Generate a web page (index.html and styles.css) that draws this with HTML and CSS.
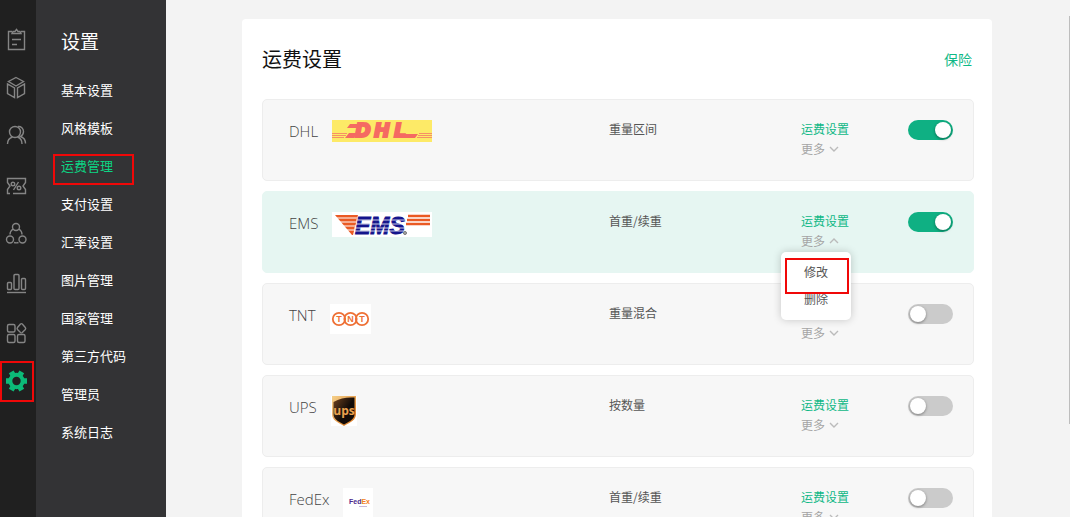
FILE: index.html
```
<!DOCTYPE html>
<html lang="zh-CN">
<head>
    <meta charset="UTF-8">
    <meta name="viewport" content="width=device-width, initial-scale=1.0">
    <title>运费设置</title>
    <link rel="stylesheet" href="styles.css">
</head>
<body>
    <nav class="rail">
        <a href="#" aria-label="订单">
            <svg viewBox="0 0 24 25"><path d="M7 5.500H3.500v18h16v-18H16M7 7.500l1-2h2l1.500-2 1.500 2h2l1 2zM7 13.500h9M7 18.500h5"/></svg>
        </a>
        <a href="#" aria-label="商品">
            <svg viewBox="0 0 24 25"><path d="M11 2.500l7.500 4L11 11 3.500 6.500zM2.500 9v9.500l7 4V13zM19.500 9v9.500l-7 4V13z"/></svg>
        </a>
        <a href="#" aria-label="客户">
            <svg viewBox="0 0 24 25"><circle cx="10" cy="8" r="5.500"/><path d="M2.500 20c0-4 2-6 5-7M12.500 13c3 1 4.500 3 4.500 7M13 2.500c3-.5 5.500 2 5.500 5 0 2-1 4-3 5 3 1 5 3 5 7"/></svg>
        </a>
        <a href="#" aria-label="营销">
            <svg viewBox="0 0 24 25"><path d="M5 20.500H2.500v-4L5 13 2.500 9.500v-4h18v4L18 13l2.500 3.500v4H8M8.500 17l5-8"/><circle cx="8" cy="11" r="1.800"/><circle cx="14" cy="15" r="1.800"/></svg>
        </a>
        <a href="#" aria-label="分销">
            <svg viewBox="0 0 24 25"><circle cx="11" cy="5" r="3.500"/><circle cx="5" cy="17.500" r="3.500"/><circle cx="17.500" cy="17.500" r="3.500"/><path d="M8 7c-2 1.500-3 3.500-3 5.500M14 7c2 1.500 3 3.500 3 5.500M9 20.500c1.500.500 3 .5 4.500 0"/></svg>
        </a>
        <a href="#" aria-label="统计">
            <svg viewBox="0 0 24 25"><rect x="2.500" y="11.500" width="4" height="7" rx="1"/><rect x="9" y="3.500" width="5" height="15" rx="1"/><rect x="16.500" y="7.500" width="4" height="11" rx="1"/><path d="M2 21.500h19"/></svg>
        </a>
        <a href="#" aria-label="应用">
            <svg viewBox="0 0 24 25"><rect x="2.500" y="4.500" width="7.500" height="7.500" rx="1.500"/><rect x="2.500" y="14.500" width="7.500" height="8" rx="1.500"/><rect x="12.500" y="14.500" width="7.500" height="8" rx="1.500"/><path d="M15.500 4l-3 3.500q-.8 1 0 2l3 3q.9.700 1.800 0l3-3q.8-1 0-2l-3-3.500q-.9-.7-1.800 0z"/></svg>
        </a>
        <a href="#" class="current marked" aria-label="设置">
            <svg viewBox="0 0 24 25"><circle cx="11.500" cy="12" r="6.200" stroke-width="4"/><path d="M1 12h4M18 12h4M15 18.100l1.800 3M8 18.100l-1.800 3M15 5.900l1.800-3M8 5.900l-1.800-3" stroke-width="5.500"/></svg>
        </a>
    </nav>

    <aside class="menu">
        <h2>设置</h2>
        <ul>
            <li><a href="#">基本设置</a></li>
            <li><a href="#">风格模板</a></li>
            <li class="active marked"><a href="#">运费管理</a></li>
            <li><a href="#">支付设置</a></li>
            <li><a href="#">汇率设置</a></li>
            <li><a href="#">图片管理</a></li>
            <li><a href="#">国家管理</a></li>
            <li><a href="#">第三方代码</a></li>
            <li><a href="#">管理员</a></li>
            <li><a href="#">系统日志</a></li>
        </ul>
    </aside>

    <main class="content">
        <section class="panel">
            <header class="panel-header">
                <h1>运费设置</h1>
                <a href="#">保险</a>
            </header>

            <div class="item">
                <div class="name">
                    <label for="dhl">DHL</label>
                    <svg class="logo" width="100" height="22" viewBox="0 0 100 22">
                        <rect width="100" height="22" fill="#fdea67"/>
                        <path d="M0 13.500h15M0 15.500h14M0 17.500h12M87 13.500h13M86 15.500h14M85 17.500h15" stroke="#f69066"/>
                        <path d="M18 4h12l-3 4H15zM13 18l4-5h8l-3 5zM67 14h19l-3 4H66z" fill="#f56a62"/>
                        <text class="dhl-text" x="23 42 62" y="17">DHL</text>
                    </svg>
                </div>
                <div class="type">重量区间</div>
                <div class="actions">
                    <a href="#">运费设置</a>
                    <button class="more">更多 <svg viewBox="0 0 10 6"><path d="M1 1l4 4 4-4"/></svg></button>
                </div>
                <input type="checkbox" class="switch" id="dhl" checked>
            </div>

            <div class="item selected">
                <div class="name">
                    <label for="ems">EMS</label>
                    <svg class="logo" width="100" height="25" viewBox="0 0 100 25">
                        <rect width="100" height="25" fill="#fff"/>
                        <path d="M3 3h23l-5 20h-1z" fill="#ea5a24"/>
                        <path d="M76 4h22M75 8h23M74 12h24" stroke="#ea5a24" stroke-width="2.500"/>
                        <path d="M2 6h24M2 10h24M2 14h24M2 18h24" stroke="#fff"/>
                        <text class="ems-text" x="23" y="22">EMS</text>
                        <path d="M24 8h51M24 12h49M22 16h51M22 19h51" stroke="#fff" stroke-width=".8"/>
                        <circle cx="73" cy="21" r="1.500" fill="#aaa" stroke="#777"/>
                    </svg>
                </div>
                <div class="type">首重/续重</div>
                <div class="actions">
                    <a href="#">运费设置</a>
                    <button class="more" aria-expanded="true">更多 <svg viewBox="0 0 10 6"><path d="M1 5l4-4 4 4"/></svg></button>
                    <div class="dropdown">
                        <button class="marked">修改</button>
                        <button>删除</button>
                    </div>
                </div>
                <input type="checkbox" class="switch" id="ems" checked>
            </div>

            <div class="item">
                <div class="name">
                    <label for="tnt">TNT</label>
                    <svg class="logo" width="41" height="30" viewBox="0 0 41 30">
                        <rect width="41" height="30" fill="#fff"/>
                        <g fill="none" stroke="#ee7035" stroke-width="1.800">
                            <circle cx="9" cy="15" r="6.200"/>
                            <circle cx="20.500" cy="15" r="6.200"/>
                            <circle cx="32" cy="15" r="6.200"/>
                        </g>
                        <g class="tnt-text">
                            <text x="9" y="18">T</text>
                            <text x="20.500" y="18">N</text>
                            <text x="32" y="18">T</text>
                        </g>
                    </svg>
                </div>
                <div class="type">重量混合</div>
                <div class="actions">
                    <a href="#">运费设置</a>
                    <button class="more">更多 <svg viewBox="0 0 10 6"><path d="M1 1l4 4 4-4"/></svg></button>
                </div>
                <input type="checkbox" class="switch" id="tnt">
            </div>

            <div class="item">
                <div class="name">
                    <label for="ups">UPS</label>
                    <svg class="logo" width="26" height="30" viewBox="0 0 26 30">
                        <defs>
                            <linearGradient id="gold" x2="1" y2="1">
                                <stop offset="0" stop-color="#f5d08a"/>
                                <stop offset="1" stop-color="#d9741c"/>
                            </linearGradient>
                            <linearGradient id="brown" x2=".6" y2=".5">
                                <stop offset="0" stop-color="#70431f"/>
                                <stop offset="1" stop-color="#130c08"/>
                            </linearGradient>
                        </defs>
                        <rect width="26" height="30" fill="#fff"/>
                        <path d="M1 0h24v18c0 6-5 8-12 12C6 26 1 24 1 18z" fill="url(#gold)"/>
                        <path d="M2.500 6C9 2 16 1 23.500 1.500V18c0 5-4 7-10.500 10.500C6.500 25 2.500 23 2.500 18z" fill="url(#brown)"/>
                        <text class="ups-text" x="13" y="19">ups</text>
                    </svg>
                </div>
                <div class="type">按数量</div>
                <div class="actions">
                    <a href="#">运费设置</a>
                    <button class="more">更多 <svg viewBox="0 0 10 6"><path d="M1 1l4 4 4-4"/></svg></button>
                </div>
                <input type="checkbox" class="switch" id="ups">
            </div>

            <div class="item">
                <div class="name">
                    <label for="fedex">FedEx</label>
                    <svg class="logo" width="30" height="30" viewBox="0 0 30 30">
                        <rect width="30" height="30" fill="#fff"/>
                        <text class="fedex-text" x="6" y="16">Fed<tspan>Ex</tspan></text>
                        <path d="M16 18.500h8" stroke="#c9b8d8"/>
                    </svg>
                </div>
                <div class="type">首重/续重</div>
                <div class="actions">
                    <a href="#">运费设置</a>
                    <button class="more">更多 <svg viewBox="0 0 10 6"><path d="M1 1l4 4 4-4"/></svg></button>
                </div>
                <input type="checkbox" class="switch" id="fedex">
            </div>
        </section>
        <div class="scroll-thumb"></div>
    </main>
</body>
</html>
```
FILE: styles.css
```
* {
    box-sizing: border-box;
}

body {
    display: flex;
    height: 100vh;
    margin: 0;
    overflow: hidden;
    background: #f3f3f3;
    color: #555;
    font-family: "Noto Sans CJK SC", sans-serif;
    font-size: 12px;
    line-height: 20px;
}

a {
    color: #0fb886;
    text-decoration: none;
}

button {
    padding: 0;
    border: none;
    background: none;
    color: inherit;
    font: inherit;
    cursor: pointer;
}

/* icon rail */
.rail {
    flex: 0 0 36px;
    padding: 14px 2px 0 0;
    background: #202020;
}

.rail a {
    display: flex;
    align-items: center;
    justify-content: center;
    height: 49px;
}

.rail svg {
    width: 24px;
    height: 25px;
    fill: none;
    stroke: #858585;
    stroke-width: 1.4;
}

.rail .current svg {
    stroke: #0cbb78;
}

/* settings menu */
.menu {
    flex: 0 0 130px;
    padding: 27px 0 0 25px;
    background: #333335;
    color: #fff;
}

.menu h2 {
    margin: 0 0 16px;
    font-size: 19px;
    font-weight: 400;
    line-height: 28px;
}

.menu ul {
    margin: 0;
    padding: 0;
    list-style: none;
}

.menu li {
    font-size: 13px;
    line-height: 38px;
}

.menu a {
    color: #fff;
}

.menu .active a {
    color: #0cd584;
}

/* red frames */
.marked {
    position: relative;
}

.marked::after {
    content: "";
    position: absolute;
    border: 2px solid #f00808;
    pointer-events: none;
}

.rail .marked::after {
    inset: 4px 0;
}

.menu .marked::after {
    inset: 7px 32px 0 -8px;
}

.dropdown .marked::after {
    inset: 0 2px -9px 4px;
}

/* content */
.content {
    position: relative;
    flex: 1;
    padding: 19px 2px 0 0;
}

.panel {
    max-width: 750px;
    min-height: 100%;
    margin: 0 auto;
    padding: 20px 18px 20px 20px;
    border-radius: 4px;
    background: #fff;
}

.panel-header {
    display: flex;
    align-items: center;
    justify-content: space-between;
    padding: 0 2px 20px 0;
    font-size: 14px;
}

.panel-header h1 {
    margin: 0;
    color: #111;
    font-size: 20px;
    font-weight: 400;
    line-height: 40px;
}

.item {
    display: grid;
    grid-template-columns: 1fr 192px 107px 45px;
    align-items: start;
    height: 82px;
    margin-bottom: 10px;
    padding: 20px 20px 0 26px;
    border: 1px solid #ededed;
    border-radius: 5px;
    background: #f7f7f7;
}

.item.selected {
    border-color: #e6f6f2;
    background: #e6f6f2;
}

.name {
    display: flex;
    align-items: flex-start;
    gap: 14px;
    color: #444;
    font-family: "Open Sans", sans-serif;
    font-size: 15px;
    font-weight: 300;
    line-height: 22px;
}

.type,
.actions {
    line-height: 18px;
}

.actions {
    position: relative;
    display: flex;
    flex-direction: column;
    align-items: flex-start;
    gap: 2px;
}

.more {
    display: flex;
    align-items: center;
    gap: 4px;
    color: #a5a5a5;
}

.more svg {
    width: 10px;
    height: 6px;
    fill: none;
    stroke: #bbb;
    stroke-width: 1.4;
}

.dropdown {
    position: absolute;
    top: 40px;
    left: -20px;
    z-index: 1;
    width: 70px;
    padding: 6px 0 8px;
    border-radius: 5px;
    background: #fff;
    box-shadow: 0 0 8px rgba(0, 0, 0, 0.2);
}

.dropdown button {
    display: block;
    width: 100%;
    line-height: 27px;
}

.switch {
    position: relative;
    width: 45px;
    height: 20px;
    margin: 0;
    border-radius: 10px;
    background: #cbcbcb;
    appearance: none;
    cursor: pointer;
}

.switch::before {
    content: "";
    position: absolute;
    top: 2px;
    left: 2px;
    width: 16px;
    height: 16px;
    border-radius: 50%;
    background: #fff;
    box-shadow: 0 1px 3px rgba(0, 0, 0, 0.4);
}

.switch:checked {
    background: #0fb083;
}

.switch:checked::before {
    left: 27px;
}

/* logo lettering */
.dhl-text {
    fill: #f56a62;
    stroke: #f56a62;
    stroke-width: 2;
    font: italic bold 19px "DejaVu Sans", sans-serif;
}

.ems-text {
    fill: #14148c;
    stroke: #14148c;
    font: italic bold 23px "Liberation Sans", sans-serif;
}

.tnt-text {
    fill: #ee7035;
    font: bold 9px "Liberation Sans", sans-serif;
    text-anchor: middle;
}

.ups-text {
    fill: #eaa24e;
    font: bold 12px "Open Sans", sans-serif;
    text-anchor: middle;
}

.fedex-text {
    fill: #4d2a8c;
    font: bold 7px "Liberation Sans", sans-serif;
}

.fedex-text tspan {
    fill: #f58220;
}

.scroll-thumb {
    position: absolute;
    top: 16px;
    right: 0;
    width: 1px;
    height: 79%;
    background: #bdbdbd;
}
```
